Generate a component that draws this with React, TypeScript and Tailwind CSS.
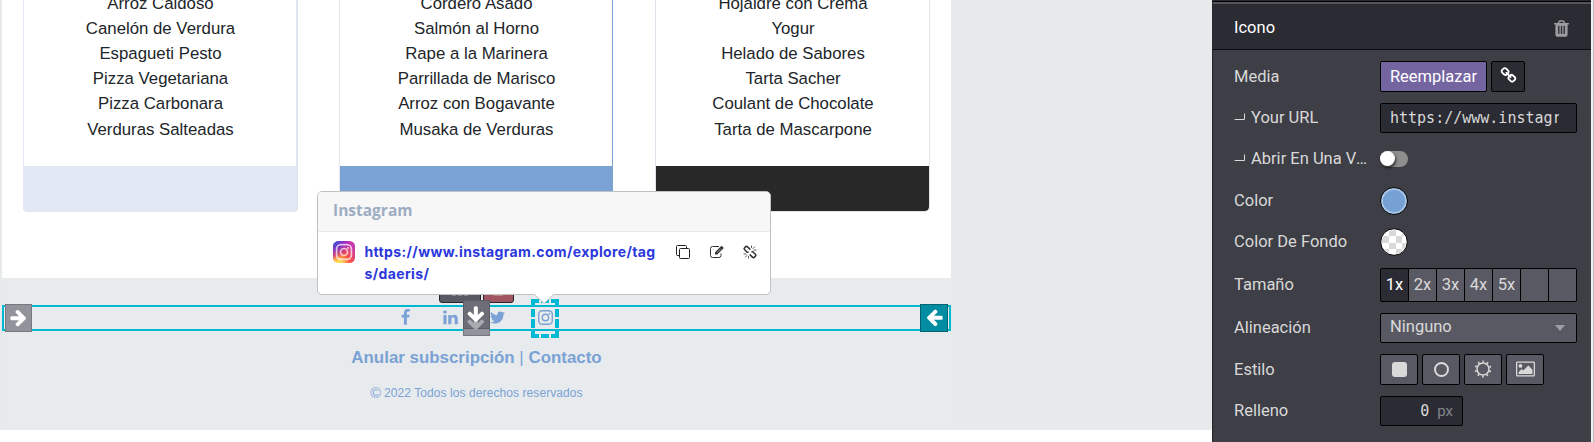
import React from "react";

type GlyphProps = { d: string; className?: string; viewBox?: string };

const Glyph = ({ d, className = "", viewBox = "0 0 1792 1792" }: GlyphProps) => (
  <svg viewBox={viewBox} className={className} fill="currentColor" aria-hidden="true">
    <path d={d} />
  </svg>
);

const ARROW =
  "M1600 960q0 54-37 91l-651 651q-39 37-91 37-51 0-90-37l-75-75q-38-38-38-91t38-91l293-293H245q-52 0-84.500-37.500T128 1024V896q0-53 32.500-90.500T245 768h704L656 474q-38-36-38-90t38-90l75-75q38-38 90-38 53 0 91 38l651 651q37 35 37 90z";
const TRASH =
  "M704 1376V672q0-14-9-23t-23-9h-64q-14 0-23 9t-9 23v704q0 14 9 23t23 9h64q14 0 23-9t9-23zm256 0V672q0-14-9-23t-23-9h-64q-14 0-23 9t-9 23v704q0 14 9 23t23 9h64q14 0 23-9t9-23zm256 0V672q0-14-9-23t-23-9h-64q-14 0-23 9t-9 23v704q0 14 9 23t23 9h64q14 0 23-9t9-23zM672 384h448l-48-117q-7-9-17-11H738q-10 2-17 11zm928 32v64q0 14-9 23t-23 9h-96v948q0 83-47 143.500t-113 60.500H480q-66 0-113-58.500T320 1464V512h-96q-14 0-23-9t-9-23v-64q0-14 9-23t23-9h309l70-167q15-37 54-63t79-26h320q40 0 79 26t54 63l70 167h309q14 0 23 9t9 23z";
const LINK =
  "M1520 1216q0-40-28-68l-208-208q-28-28-68-28-42 0-72 32 3 3 19 18.500t21.500 21.500 15 19 13 25.500 3.500 27.500q0 40-28 68t-68 28q-15 0-27.500-3.500t-25.500-13-19-15-21.500-21.500-18.500-19q-33 31-33 73 0 40 28 68l206 207q27 27 68 27 40 0 68-26l147-146q28-28 28-67zm-703-705q0-40-28-68l-206-207q-28-28-68-28-39 0-68 27l-147 146q-28 28-28 67 0 40 28 68l208 208q27 27 68 27 42 0 72-31-3-3-19-18.500t-21.500-21.500-15-19-13-25.500-3.500-27.500q0-40 28-68t68-28q15 0 27.500 3.500t25.500 13 19 15 21.500 21.500 18.500 19q33-31 33-73zm895 705q0 120-85 203l-147 146q-83 83-203 83-121 0-204-85l-206-207q-83-83-83-203 0-123 88-209l-88-88q-86 88-208 88-120 0-204-84L164 652q-84-84-84-204t85-203L312 99q83-83 203-83 121 0 204 85l206 207q83 83 83 203 0 123-88 209l88 88q86-88 208-88 120 0 204 84l208 208q84 84 84 204z";
const FACEBOOK =
  "M1343 12v264h-157q-86 0-116 36t-30 108v189h293l-39 296h-254v759H734V905H479V609h255V391q0-186 104-288.500T1115 0q147 0 228 12z";
const LINKEDIN =
  "M477 625v991H147V625h330zm21-306q1 73-50.500 122T312 490h-2q-82 0-132-49t-50-122q0-74 51.500-122.500T314 148t133 48.500T498 319zm1166 729v568h-329v-530q0-105-40.500-164.500T1168 862q-63 0-105.500 34.500T999 982q-11 30-11 81v553H659q2-399 2-647t-1-296l-1-48h329v144h-2q20-32 41-56t56.500-52 87-43.500T1285 602q171 0 275 113.500t104 332.500z";
const TWITTER =
  "M1684 408q-67 98-162 167 1 14 1 42 0 130-38 259.500T1369.500 1125 1185 1335.500t-258 146-323 54.500q-271 0-496-145 35 4 78 4 225 0 401-138-105-2-188-64.500T285 1033q33 5 61 5 43 0 85-11-112-23-185.500-111.500T172 710v-4q68 38 146 41-66-44-105-115t-39-154q0-88 44-163 121 149 294.500 238.500T884 653q-8-38-8-74 0-134 94.500-228.500T1199 256q140 0 236 102 109-21 205-78-37 115-142 178 93-10 186-50z";
const PICTURE =
  "M576 576q0 80-56 136t-136 56-136-56-56-136 56-136 136-56 136 56 56 136zm1024 384v448H192v-192l320-320 160 160 512-512zm96-704H96q-13 0-22.500 9.500T64 288v1216q0 13 9.500 22.500t22.500 9.500h1600q13 0 22.500-9.500t9.500-22.500V288q0-13-9.500-22.500T1696 256zm160 32v1216q0 66-47 113t-113 47H96q-66 0-113-47t-47-113V288q0-66 47-113T96 128h1600q66 0 113 47t47 113z";

const InstagramOutline = () => (
  <svg viewBox="0 0 15 15" className="size-[15px]" fill="none" stroke="#7aa2d4" aria-hidden="true">
    <rect x="0.7" y="0.7" width="13.600" height="13.600" rx="3.500" strokeWidth="1.400" />
    <circle cx="7.500" cy="7.500" r="3.200" strokeWidth="1.400" />
    <circle cx="11.500" cy="3.600" r="0.900" fill="#7aa2d4" stroke="none" />
  </svg>
);

const InstagramLogo = () => (
  <svg viewBox="0 0 22 22" className="size-[22px] shrink-0" aria-hidden="true">
    <defs>
      <radialGradient id="warm" cx="0.270" cy="1.070" r="1">
        <stop offset="0" stopColor="#fd5" />
        <stop offset="0.150" stopColor="#fd5" />
        <stop offset="0.500" stopColor="#ff543e" />
        <stop offset="1" stopColor="#c837ab" />
      </radialGradient>
      <radialGradient id="cool" cx="-0.050" cy="-0.020" r="0.850">
        <stop offset="0" stopColor="#3771c8" />
        <stop offset="0.250" stopColor="#4a50d0" />
        <stop offset="1" stopColor="#6600ff" stopOpacity="0" />
      </radialGradient>
    </defs>
    <rect width="22" height="22" rx="5.500" fill="url(#warm)" />
    <rect width="22" height="22" rx="5.500" fill="url(#cool)" />
    <g fill="none" stroke="#fff" strokeOpacity="0.700" strokeWidth="1.700">
      <rect x="3.600" y="3.600" width="14.800" height="14.800" rx="4.300" />
      <circle cx="11" cy="11" r="3.500" />
    </g>
    <circle cx="15" cy="7" r="0.900" fill="#fff" fillOpacity="0.850" />
  </svg>
);

const CopyIcon = () => (
  <svg viewBox="0 0 14 14" className="size-[14px]" fill="none" stroke="#222" aria-hidden="true">
    <rect x="3.500" y="3.500" width="10" height="10" rx="1" />
    <path d="M3.500 10.500h-2a1 1 0 0 1-1-1v-8a1 1 0 0 1 1-1h8a1 1 0 0 1 1 1v2" />
  </svg>
);

const EditIcon = () => (
  <svg viewBox="0 0 14 14" className="size-[14px]" fill="none" stroke="#333" aria-hidden="true">
    <path d="M9 1.500H2.500a2 2 0 0 0-2 2v7a2 2 0 0 0 2 2H9a2 2 0 0 0 2-2V8.500" />
    <path d="M5 9.500V7.200L11.500.7l2.300 2.300L7.300 9.500z" fill="#333" stroke="none" />
    <path d="M7 7.600l4-4" stroke="#ddd" strokeWidth="0.600" />
  </svg>
);

const UnlinkIcon = () => (
  <svg viewBox="0 0 14 14" className="size-[14px]" fill="none" stroke="#333" aria-hidden="true">
    <path
      strokeWidth="1.500"
      d="M7.300 4.600 4.600 1.900a1.500 1.500 0 0 0-2.100 0l-.8.8a1.500 1.500 0 0 0 0 2.100l2.500 2.500h1.400M6.700 9.400l2.700 2.700a1.500 1.500 0 0 0 2.100 0l.8-.8a1.500 1.500 0 0 0 0-2.100L9.800 6.700H8.400"
    />
    <path strokeWidth="0.800" d="M8.500 3V.5M9.800 3.700l2-2M10.500 5H13.500M5.500 11v2.500M4.200 10.300l-2 2M3.500 9H.5" />
  </svg>
);

type CardProps = { items: string[]; card: string; footer: string };

const MenuCard = ({ items, card, footer }: CardProps) => (
  <div className={`flex flex-col overflow-hidden ${card}`}>
    <ul className="-mt-[9.500px] h-[175.500px] shrink-0 pl-[1px] text-center text-[16.800px] leading-[25.200px] text-[#212529]">
      {items.map((item) => (
        <li key={item}>{item}</li>
      ))}
    </ul>
    <div className={`flex-1 ${footer}`} />
  </div>
);

const Handle = ({ className, arrow }: { className: string; arrow: string }) => (
  <div className={`absolute flex items-center justify-center border text-white ${className}`}>
    <Glyph d={ARROW} className={`size-[19px] ${arrow}`} />
  </div>
);

const LinkPopover = () => (
  <div className="absolute left-[317px] top-[191px] h-[104px] w-[454px] rounded-[5px] border border-[#bfc1c3] bg-white">
    <div className="flex h-[40px] items-center rounded-t-[4px] border-b border-[#e8e8e8] bg-[#f7f7f7] pl-[15px] pb-[1px] font-['Open_Sans',sans-serif] text-[15.500px] font-bold text-[#9dadc2]">
      Instagram
    </div>
    <div className="flex pl-[15px] pt-[9px]">
      <InstagramLogo />
      <p className="ml-[9.500px] w-[300px] font-['Inter',sans-serif] text-[14px] font-bold leading-[22px] tracking-[0.370px] text-[#2b38dc]">
        https://www.instagram.com/explore/tag
        <br />
        s/daeris/
      </p>
      <div className="ml-[11.500px] mt-[4px] flex h-[14px] gap-[19.500px]">
        <CopyIcon />
        <EditIcon />
        <UnlinkIcon />
      </div>
    </div>
    <svg viewBox="0 0 20 11" className="absolute left-[216px] top-[101px] h-[11px] w-[20px]" aria-hidden="true">
      <path d="M0 0h20v1L10 10.500 0 1z" fill="#fff" />
      <path d="M0.500 1.500 10 10.500l9.500-9" fill="none" stroke="#bfc1c3" />
    </svg>
  </div>
);

const Canvas = () => (
  <main className="relative h-[442px] w-[1212px] shrink-0 overflow-hidden bg-white font-['Liberation_Sans',Arial,sans-serif]">
    <div className="h-[430px] rounded-br-[3px] bg-[#e6eaea] pl-[2px]">
      <section className="flex h-[278px] w-[949px] bg-white pl-[21px]">
        <MenuCard
          card="h-[212px] w-[275px] rounded-b-[4px] border-l border-r-2 border-[#e1e6f2]"
          footer="bg-[#e1e7f3]"
          items={["Arroz Caldoso", "Canelón de Verdura", "Espagueti Pesto", "Pizza Vegetariana", "Pizza Carbonara", "Verduras Salteadas"]}
        />
        <MenuCard
          card="ml-[41px] h-[212px] w-[274px] rounded-b-[4px] border-x border-l-[#e3e5ef] border-r-[#7aa2d4]"
          footer="bg-[#7aa2d4]"
          items={["Cordero Asado", "Salmón al Horno", "Rape a la Marinera", "Parrillada de Marisco", "Arroz con Bogavante", "Musaka de Verduras"]}
        />
        <MenuCard
          card="ml-[42px] h-[212px] w-[275px] rounded-b-[5px] border border-t-0 border-[#e3e3ee]"
          footer="rounded-b-[4px] bg-[#282828]"
          items={["Hojaldre con Crema", "Yogur", "Helado de Sabores", "Tarta Sacher", "Coulant de Chocolate", "Tarta de Mascarpone"]}
        />
      </section>
      <footer className="flex h-[152px] w-[949px] flex-col items-center bg-[#e8ebee] pt-[27px] text-[#7aa2d4]">
        <div className="flex h-[26px] w-full items-center border-2 border-[#00b9d1] pl-[393px]">
          <Glyph d={FACEBOOK} className="mt-[-2px] size-[17px]" />
          <Glyph d={LINKEDIN} className="ml-[28px] mt-[-2px] size-[17px]" />
          <Glyph d={TWITTER} className="ml-[30px] mt-[-2px] size-[17px]" />
          <span className="ml-[31.500px] mt-[-2px]">
            <InstagramOutline />
          </span>
        </div>
        <p className="mt-[14px] text-[16.900px] leading-[25px]">
          <b>Anular subscripción</b> | <b>Contacto</b>
        </p>
        <p className="mt-[14px] flex h-[18px] items-center text-[12px] leading-[18px] tracking-[0.080px]">
          <span className="mr-[3px] text-[14.500px]">©</span>
          <span>2022 Todos los derechos reservados</span>
        </p>
      </footer>
    </div>

    <div className="absolute left-[439px] top-[280px] flex h-[23px] w-[42px] items-end justify-center gap-[2px] rounded-[3px] border border-[#25252b] bg-[#595964] pb-[6px]">
      <i className="h-[2px] w-[4px] bg-[#8a8a92]" />
      <i className="h-[2px] w-[4px] bg-[#8a8a92]" />
      <i className="h-[2px] w-[4px] bg-[#8a8a92]" />
    </div>
    <div className="absolute left-[483px] top-[280px] flex h-[23px] w-[31px] items-end justify-center rounded-[3px] border border-[#25252b] bg-[#a05560] pb-[6px]">
      <i className="h-[2px] w-[9px] bg-[#b98a8c]" />
    </div>
    <Handle className="left-[5px] top-[304px] h-[28px] w-[27px] border-[#77777f] bg-[#93939c] pr-[1px] pb-[1px]" arrow="" />
    <Handle className="left-[920px] top-[304px] h-[28px] w-[28px] border-[#03636f] bg-[#038da3]" arrow="rotate-180" />
    <div className="absolute left-[463px] top-[304px] h-[32px] w-[27px] border border-[#77777f] bg-[#93939c]" />
    <div className="absolute left-[463px] top-[300px] h-[29px] w-[27px] border border-[#5c5c66] bg-[#6d6d78] text-white">
      <Glyph d={ARROW} className="absolute left-[3px] top-[12px] size-[19px] rotate-90 text-[#a9a9b0]" />
      <Glyph d={ARROW} className="absolute left-[3px] top-[3.500px] size-[19px] rotate-90" />
    </div>
    <svg viewBox="0 0 28 39" className="absolute left-[531px] top-[299px] h-[39px] w-[28px]" fill="#00b9d4" aria-hidden="true">
      <path d="M0 0h8v4H4v4H0zM10 0h8v4h-8zM20 0h8v8h-4V4h-4zM0 10h4v8H0zM24 10h4v8h-4zM0 20h4v9H0zM24 20h4v9h-4zM0 31h4v4h4v4H0zM10 35h8v4h-8zM24 31h4v8h-8v-4h4z" />
    </svg>
    <LinkPopover />
  </main>
);

const Row = ({ label, sub, className, children }: { label: string; sub?: boolean; className: string; children: React.ReactNode }) => (
  <div className={`flex items-center ${className}`}>
    <span className="flex w-[146px] shrink-0 items-center pt-[1px]">
      {sub && (
        <svg viewBox="0 0 12 8" className="mr-[5px] mt-[-3px] h-[8px] w-[12px] shrink-0" fill="none" stroke="#d9d9d9" aria-hidden="true">
          <path d="M0.500 6.500h10V0.500" />
        </svg>
      )}
      <span className="w-[118px] truncate">{label}</span>
    </span>
    {children}
  </div>
);

const STYLE_BUTTON = "flex h-full w-[38px] items-center justify-center rounded-[2px] border border-black bg-[#595964] pb-[1px] text-[#d9d9d9]";

const Panel = () => (
  <aside className="flex h-[442px] w-[379px] flex-col border-l border-[#25252b] bg-[#3e3e46] font-['Roboto',sans-serif] text-[16.500px] text-[#d9d9d9]">
    <div className="h-[1px] shrink-0 bg-[#2b2b33]" />
    <div className="h-[1px] shrink-0 bg-black" />
    <div className="h-[2px] shrink-0 bg-[#55555b]" />
    <header className="flex h-[46px] shrink-0 items-center justify-between border-b border-[#0c0c10] bg-[#2b2b33] pl-[21px] pr-[20px] text-white">
      <span className="pt-[4px]">Icono</span>
      <Glyph d={TRASH} className="mt-[3px] size-[19px] text-[#9d9da1]" />
    </header>
    <div className="pl-[21px] pt-[11px]">
      <Row label="Media" className="h-[31px]">
        <button className="h-full w-[107px] rounded-[2px] border border-black bg-[#7464a0] pt-[1px] text-white">Reemplazar</button>
        <button className="ml-[4px] flex h-full w-[34px] items-center justify-center rounded-[2px] border border-black bg-[#2b2b33] text-white">
          <Glyph d={LINK} className="mt-[-2px] size-[17px]" />
        </button>
      </Row>
      <Row label="Your URL" sub className="mt-[11px] h-[30px]">
        <div className="flex h-full w-[197px] items-center rounded-[2px] border border-black bg-[#2b2b33] px-[9px]">
          <span className="w-[169px] overflow-hidden whitespace-nowrap font-['DejaVu_Sans_Mono',monospace] text-[15px]">https://www.instagram.com</span>
        </div>
      </Row>
      <Row label="Abrir En Una Ventana Nueva" sub className="mt-[11px] h-[30px]">
        <div className="h-[16px] w-[28px] rounded-full bg-[#8e8e8e]">
          <div className="size-[15px] rounded-full bg-white shadow-[1px_2px_3px_rgba(0,0,0,0.700)]" />
        </div>
      </Row>
      <Row label="Color" className="mt-[12px] h-[29px]">
        <div className="size-[28px] rounded-full border border-black bg-[#a9c5e8] p-[2px]">
          <div className="size-full rounded-full bg-[#76a1d5]" />
        </div>
      </Row>
      <Row label="Color De Fondo" className="mt-[12px] h-[29px]">
        <svg viewBox="0 0 28 28" className="size-[28px]" aria-hidden="true">
          <clipPath id="disc">
            <circle cx="14" cy="14" r="12" />
          </clipPath>
          <circle cx="14" cy="14" r="13.300" fill="#fff" stroke="#000" />
          <path clipPath="url(#disc)" fill="#d9d9d9" d="M9 2h7v6H9zM2 8h7v7H2zM16 8h6v7h-6zM9 15h7v6H9zM22 15h5v6h-5zM16 21h6v6h-6zM3 21h6v6H3zM22 2h5v6h-5z" />
        </svg>
      </Row>
      <Row label="Tamaño" className="mt-[12px] h-[34px]">
        <div className="grid h-full w-[197px] grid-cols-7 gap-px overflow-hidden rounded-[2px] border border-black bg-black text-center leading-[32px]">
          <span className="bg-[#2b2b33] text-white">1x</span>
          <span className="bg-[#595964]">2x</span>
          <span className="bg-[#595964]">3x</span>
          <span className="bg-[#595964]">4x</span>
          <span className="bg-[#595964]">5x</span>
          <span className="bg-[#595964]" />
          <span className="bg-[#595964]" />
        </div>
      </Row>
      <Row label="Alineación" className="mt-[11px] h-[30px]">
        <div className="flex h-full w-[197px] items-center justify-between rounded-[2px] border border-black bg-[#595964] pl-[9px] pr-[11px]">
          <span className="mt-[-1px]">Ninguno</span>
          <svg viewBox="0 0 10 6" className="mt-[-1px] h-[6px] w-[10px]" aria-hidden="true">
            <path d="M0 0h10L5 6z" fill="#9d9da1" />
          </svg>
        </div>
      </Row>
      <Row label="Estilo" className="mt-[11px] h-[31px]">
        <div className="flex h-full gap-[4px]">
          <button className={STYLE_BUTTON}>
            <span className="size-[15px] rounded-[3px] bg-[#d9d9d9]" />
          </button>
          <button className={STYLE_BUTTON}>
            <span className="size-[15px] rounded-full border-2 border-[#d9d9d9]" />
          </button>
          <button className={STYLE_BUTTON}>
            <svg viewBox="-9 -9 18 18" className="size-[18px]" fill="none" stroke="currentColor" aria-hidden="true">
              <circle r="6" strokeWidth="1.500" />
              <circle r="7.500" strokeWidth="1.800" strokeDasharray="1.700 3.012" strokeDashoffset="0.850" transform="rotate(-90)" />
            </svg>
          </button>
          <button className={STYLE_BUTTON}>
            <Glyph d={PICTURE} viewBox="-64 0 1920 1792" className="h-[18px] w-[19px]" />
          </button>
        </div>
      </Row>
      <Row label="Relleno" className="mt-[11px] h-[30px]">
        <div className="flex h-full w-[83px] items-center justify-end rounded-[2px] border border-black bg-[#2b2b33] pr-[9px]">
          <span className="font-['DejaVu_Sans_Mono',monospace] text-[15px]">0</span>
          <span className="ml-[8px] text-[15px] text-[#85858b]">px</span>
        </div>
      </Row>
    </div>
  </aside>
);

export default function App() {
  return (
    <div className="flex h-[442px] w-[1594px] overflow-hidden bg-[#f0f1f1]">
      <Canvas />
      <Panel />
      <div className="ml-[2px] w-[1px] bg-[#b9b9bd]" />
    </div>
  );
}
